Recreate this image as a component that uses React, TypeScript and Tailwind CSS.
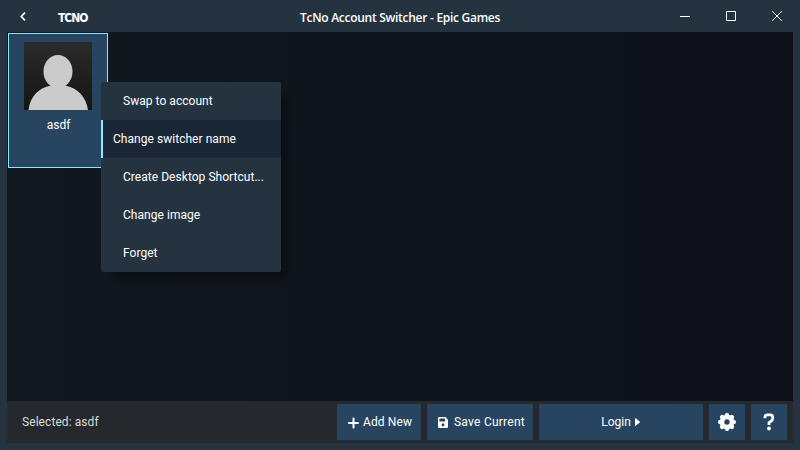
import React from "react";

const MENU = [
  { label: "Swap to account", active: false },
  { label: "Change switcher name", active: true },
  { label: "Create Desktop Shortcut...", active: false },
  { label: "Change image", active: false },
  { label: "Forget", active: false },
];

function TitleBar() {
  return (
    <header className="flex h-8 shrink-0 items-center text-white">
      <div className="flex w-[300px] items-center">
        <svg className="ml-5 h-[9px] w-[6px]" viewBox="0 0 6 9" fill="none" stroke="currentColor" strokeWidth="1.7">
          <path d="M5 0.7 1.3 4.5 5 8.3" />
        </svg>
        <span className="ml-8 mt-[3px] w-[30px] font-['DejaVu_Sans_Condensed','DejaVu_Sans',sans-serif] text-[12px] leading-3 font-bold tracking-[-1px] [font-stretch:condensed]">TCNO</span>
      </div>
      <h1 className="w-[200px] whitespace-nowrap pt-[3px] font-['Open_Sans',sans-serif] text-[12px] leading-4 font-semibold tracking-[-0.28px]">
        TcNo Account Switcher - Epic Games
      </h1>
      <div className="ml-auto flex">
        <button className="flex h-8 w-[46px] items-center justify-center">
          <svg className="h-[10px] w-[10px]" viewBox="0 0 10 10"><path fill="#fff" d="M0 5h10v1H0z" /></svg>
        </button>
        <button className="flex h-8 w-[46px] items-center justify-center">
          <svg className="h-[10px] w-[10px]" viewBox="0 0 10 10"><path fill="none" stroke="#fff" d="M.5.5h9v9h-9z" /></svg>
        </button>
        <button className="flex h-8 w-[46px] items-center justify-center">
          <svg className="h-[10px] w-[10px]" viewBox="0 0 10 10"><path fill="none" stroke="#fff" d="M.2.2 9.8 9.8M9.8.2.2 9.8" /></svg>
        </button>
      </div>
    </header>
  );
}

function Avatar() {
  return (
    <svg className="h-[68px] w-[68px]" viewBox="0 0 68 68">
      <defs>
        <linearGradient id="shade" x1="0" y1="0" x2="0" y2="1">
          <stop stopColor="#2b2b2b" />
          <stop offset="1" stopColor="#141414" />
        </linearGradient>
      </defs>
      <path fill="url(#shade)" d="M0 0h68v68H0z" />
      <ellipse cx="34" cy="29.5" rx="14.5" ry="16.5" fill="#cbcbcb" />
      <path fill="#cbcbcb" d="M4.5 68C6 55 14 46 27 43.5h14C54 46 62 55 64 68z" />
    </svg>
  );
}

function ContextMenu() {
  return (
    <ul className="absolute left-[94px] top-[50px] w-[180px] overflow-hidden rounded-[2px] bg-[#253340] tracking-[0.04px] text-white shadow-[10px_10px_8px_-4px_rgba(0,0,0,0.35)]">
      {MENU.map((item) => (
        <li
          key={item.label}
          className={
            item.active
              ? "flex h-[38px] items-center border-l-2 border-[#8be9fd] bg-[#1b2636] pl-[10px]"
              : "flex h-[38px] items-center pl-[22px]"
          }
        >
          {item.label}
        </li>
      ))}
    </ul>
  );
}

function Footer() {
  const button = "flex h-9 items-center justify-center bg-[#274560] text-white";
  return (
    <footer className="flex h-[42px] shrink-0 items-center gap-[6px] bg-[#25292d] pl-[15px] pr-[6px]">
      <span className="mr-auto tracking-[0.07px] text-[#dcdcdc]">Selected: asdf</span>
      <button className={`${button} w-[84px] gap-[4px] pl-[2px] tracking-[0.12px]`}>
        <svg className="mt-px h-[12px] w-[11px]" viewBox="0 0 11 12" stroke="#fff" strokeWidth="2" strokeLinecap="round"><path d="M5.5 1.5v9M1 6h9" /></svg>
        Add New
      </button>
      <button className={`${button} w-[106px] gap-[6px] pl-[3px] tracking-[0.25px]`}>
        <svg className="mt-px h-[11px] w-[10px]" viewBox="0 0 448 448" preserveAspectRatio="none">
          <path fill="#fff" fillRule="evenodd" d="M434 98 350 14A48 48 0 0 0 316 0H48A48 48 0 0 0 0 48v352a48 48 0 0 0 48 48h352a48 48 0 0 0 48-48V132a48 48 0 0 0-14-34zM224 384a64 64 0 1 1 0-128 64 64 0 0 1 0 128zM320 80v104H64V64h248z" />
        </svg>
        Save Current
      </button>
      <button className={`${button} w-[164px] gap-[4px] pr-px`}>
        Login
        <svg className="h-[8px] w-[5px]" viewBox="0 0 5 8"><path fill="#fff" d="M0 0.3Q0-.2.6.2L4.7 3.6Q5 4 4.7 4.4L.6 7.8Q0 8.2 0 7.7z" /></svg>
      </button>
      <button className={`${button} w-9`}>
        <svg className="h-[18px] w-[18px]" viewBox="0 0 18 18" fill="none" stroke="#fff">
          <circle cx="9" cy="9" r="5" strokeWidth="4.6" />
          <path strokeWidth="4.4" strokeLinecap="round" d="M9 2.2v.2M9 15.6v.2M2.2 9h.2M15.6 9h.2M4.1 4.1l.2.2M13.7 13.7l.2.2M13.9 4.1l-.2.2M4.3 13.7l-.2.2" />
        </svg>
      </button>
      <button className={`${button} w-9`}>
        <svg className="h-[18px] w-[12px]" viewBox="0 0 12 18" fill="none" stroke="#fff">
          <path strokeWidth="2.8" d="M1.9 5.3V4.6Q1.9 1.9 4.4 1.9h2.8Q9.7 1.9 9.7 4.4v1.2Q9.7 7 8.3 8L6 9.7v2.3" />
          <circle cx="6" cy="15.5" r="1.9" fill="#fff" stroke="none" />
        </svg>
      </button>
    </footer>
  );
}

export default function App() {
  return (
    <div className="flex h-[450px] w-[800px] flex-col overflow-hidden bg-[#253340] font-['Roboto',sans-serif] text-[12px] leading-4">
      <TitleBar />
      <div className="mx-[7px] mb-[7px] flex flex-1 flex-col">
        <main className="relative flex-1 bg-linear-to-r from-[#11181e] to-[#0e111a] pl-px pt-px">
          <div className="flex h-[135px] w-[100px] flex-col items-center border border-[#8be9fd] bg-[#274560] pt-2 text-white">
            <Avatar />
            <span className="mt-[7px] pl-px">asdf</span>
          </div>
          <ContextMenu />
        </main>
        <Footer />
      </div>
    </div>
  );
}
